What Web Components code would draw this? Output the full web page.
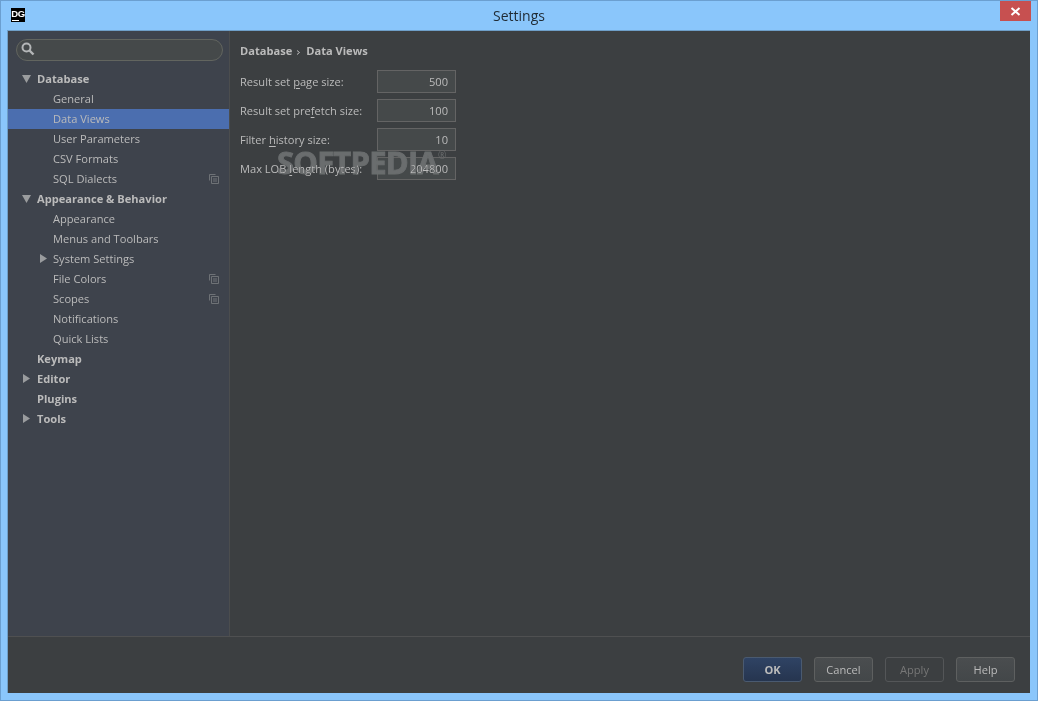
<!DOCTYPE html>
<html>
<head>
<meta charset="utf-8">
<title>Settings</title>
<style>
    html, body {
        margin: 0;
        padding: 0;
        height: 100%;
        background: #8ac6fb;
    }
</style>
</head>
<body>

<settings-window>
    <settings-tree slot="side">
        <tree-item level="0" arrow="down" bold>Database</tree-item>
        <tree-item level="1">General</tree-item>
        <tree-item level="1" selected>Data Views</tree-item>
        <tree-item level="1">User Parameters</tree-item>
        <tree-item level="1">CSV Formats</tree-item>
        <tree-item level="1" copy>SQL Dialects</tree-item>
        <tree-item level="0" arrow="down" bold>Appearance &amp; Behavior</tree-item>
        <tree-item level="1">Appearance</tree-item>
        <tree-item level="1">Menus and Toolbars</tree-item>
        <tree-item level="1" arrow="right">System Settings</tree-item>
        <tree-item level="1" copy>File Colors</tree-item>
        <tree-item level="1" copy>Scopes</tree-item>
        <tree-item level="1">Notifications</tree-item>
        <tree-item level="1">Quick Lists</tree-item>
        <tree-item level="0" bold>Keymap</tree-item>
        <tree-item level="0" arrow="right" bold>Editor</tree-item>
        <tree-item level="0" bold>Plugins</tree-item>
        <tree-item level="0" arrow="right" bold>Tools</tree-item>
    </settings-tree>

    <data-views slot="main"></data-views>

    <dialog-button slot="buttons" kind="default">OK</dialog-button>
    <dialog-button slot="buttons">Cancel</dialog-button>
    <dialog-button slot="buttons" kind="disabled">Apply</dialog-button>
    <dialog-button slot="buttons">Help</dialog-button>
</settings-window>

<script type="text/javascript">
    'use strict'

    class SettingsWindow extends HTMLElement {
        constructor () {
            super();
            let root = this.attachShadow({mode: 'open'});
            root.innerHTML = `
                <style>
                    :host {
                        display: flex;
                        flex-direction: column;
                        position: relative;
                        box-sizing: border-box;
                        width: 1038px;
                        height: 701px;
                        background: #8ac6fb;
                        border: 1px solid #6b9fd0;
                        font: 11.1px "Open Sans", "Noto Sans", sans-serif;
                        color: #bbbbbb;
                    }
                    .title {
                        flex: none;
                        height: 29px;
                        display: flex;
                        align-items: center;
                        justify-content: center;
                        position: relative;
                        font: 14px "Open Sans", "Noto Sans", sans-serif;
                        color: #1f2a33;
                    }
                    .logo {
                        position: absolute;
                        left: 10px;
                        top: 7px;
                        width: 14px;
                        height: 14px;
                        background: #000;
                        color: #fff;
                        font: bold 9.5px/11px "Liberation Sans", sans-serif;
                        letter-spacing: -0.4px;
                        text-align: center;
                    }
                    .logo::after {
                        content: '';
                        position: absolute;
                        left: 1px;
                        bottom: 1px;
                        width: 7px;
                        height: 1px;
                        background: #fff;
                    }
                    .close {
                        position: absolute;
                        right: 6px;
                        top: 0;
                        width: 31px;
                        height: 20px;
                        background: #c75050;
                        display: flex;
                        align-items: center;
                        justify-content: center;
                    }
                    .client {
                        flex: none;
                        margin: 0 7px 0 6px;
                        height: 663px;
                        box-sizing: border-box;
                        border-top: 1px solid #6f9fc8;
                        border-left: 1px solid #6f9fc8;
                        background: #3c3f41;
                        display: flex;
                        flex-direction: column;
                    }
                    .panes {
                        flex: 1;
                        display: flex;
                        min-height: 0;
                    }
                    .side {
                        flex: none;
                        width: 221px;
                        background: #3e434c;
                        border-right: 1px solid #4b4d4e;
                    }
                    .main {
                        flex: 1;
                    }
                    .foot {
                        flex: none;
                        box-sizing: border-box;
                        height: 57px;
                        border-top: 1px solid #4f5051;
                        display: flex;
                        justify-content: flex-end;
                        align-items: flex-start;
                        gap: 12px;
                        padding: 20px 15px 0 0;
                    }
                </style>
                <div class="title">
                    <span class="logo">DG</span>
                    <span>Settings</span>
                    <span class="close">
                        <svg width="11" height="9" viewBox="0 0 11 9"><path d="M1.5 1 L9.5 8 M9.5 1 L1.5 8" stroke="#fff" stroke-width="2" fill="none"/></svg>
                    </span>
                </div>
                <div class="client">
                    <div class="panes">
                        <div class="side"><slot name="side"></slot></div>
                        <div class="main"><slot name="main"></slot></div>
                    </div>
                    <div class="foot"><slot name="buttons"></slot></div>
                </div>
            `;
        }
    }
    customElements.define('settings-window', SettingsWindow);

    class SettingsTree extends HTMLElement {
        constructor () {
            super();
            let root = this.attachShadow({mode: 'open'});
            root.innerHTML = `
                <style>
                    :host {
                        display: block;
                        padding-top: 8px;
                    }
                    .search {
                        box-sizing: border-box;
                        height: 22px;
                        margin: 0 6px 8px 8px;
                        border: 1px solid #62655f;
                        border-radius: 11px;
                        background: #45494a;
                        display: flex;
                        align-items: center;
                        padding-left: 4px;
                    }
                </style>
                <div class="search">
                    <svg width="16" height="16" viewBox="0 0 16 16"><circle cx="5.5" cy="5.5" r="4" fill="none" stroke="#b4b6b7" stroke-width="2"/><path d="M8.5 8.5 L12.5 12.5" stroke="#b4b6b7" stroke-width="2.4"/></svg>
                </div>
                <slot></slot>
            `;
        }
    }
    customElements.define('settings-tree', SettingsTree);

    class TreeItem extends HTMLElement {
        constructor () {
            super();
            let root = this.attachShadow({mode: 'open'});
            let level = this.getAttribute('level') === '1' ? 1 : 0;
            let arrow = this.getAttribute('arrow');
            let marker = '';
            if (arrow === 'down') {
                marker = '<svg class="arrow down" width="9" height="8" viewBox="0 0 9 8"><path d="M0 0 H9 L4.5 8 Z" fill="#9a9c9e"/></svg>';
            } else if (arrow === 'right') {
                marker = '<svg class="arrow right" width="7" height="9" viewBox="0 0 7 9"><path d="M0 0 L7 4.5 L0 9 Z" fill="#9a9c9e"/></svg>';
            }
            let copy = this.hasAttribute('copy')
                ? '<svg class="copy" width="10" height="10" viewBox="0 0 10 10"><path d="M0.5 6.5 V0.5 H6.5 M2.5 2.5 H9.5 V9.5 H2.5 Z M4 5 H8 M4 7 H8" fill="none" stroke="#6e7276"/></svg>'
                : '';
            root.innerHTML = `
                <style>
                    :host {
                        display: flex;
                        align-items: center;
                        position: relative;
                        box-sizing: border-box;
                        height: 20px;
                        padding-left: ${level ? 45 : 29}px;
                        padding-bottom: 2px;
                        color: #bbbbbb;
                        font-weight: ${this.hasAttribute('bold') ? 700 : 400};
                        white-space: nowrap;
                    }
                    :host([selected]) {
                        background: #4b6eaf;
                    }
                    .arrow {
                        position: absolute;
                    }
                    .down {
                        left: 14px;
                        top: 6px;
                    }
                    .right {
                        left: ${level ? 32 : 15}px;
                        top: 5px;
                    }
                    .copy {
                        position: absolute;
                        right: 10px;
                        top: 5px;
                    }
                </style>
                ${marker}<slot></slot>${copy}
            `;
        }
    }
    customElements.define('tree-item', TreeItem);

    class DataViews extends HTMLElement {
        constructor () {
            super();
            let root = this.attachShadow({mode: 'open'});
            root.innerHTML = `
                <style>
                    :host {
                        display: block;
                        position: relative;
                        height: 100%;
                        padding: 11px 0 0 10px;
                        box-sizing: border-box;
                        color: #bbbbbb;
                    }
                    .crumbs {
                        font-weight: 700;
                        height: 18px;
                        line-height: 18px;
                        margin-bottom: 10px;
                        white-space: nowrap;
                    }
                    .crumbs svg {
                        margin: 0 5px 0 4px;
                    }
                    .fields {
                        display: grid;
                        grid-template-columns: 137px 79px;
                        grid-auto-rows: 23px;
                        row-gap: 6px;
                        align-items: center;
                        width: max-content;
                    }
                    .value {
                        box-sizing: border-box;
                        height: 23px;
                        border: 1px solid #646464;
                        background: #45494a;
                        text-align: right;
                        padding-right: 7px;
                        line-height: 21px;
                    }
                    u {
                        text-underline-offset: 2px;
                    }
                    /* lighten keeps the brighter labels readable through the watermark */
                    .mark {
                        position: absolute;
                        left: 47px;
                        top: 112px;
                        font: 700 31px/38px "Open Sans", sans-serif;
                        letter-spacing: -0.8px;
                        -webkit-text-stroke: 0.9px #6a6d6e;
                        color: #6a6d6e;
                        mix-blend-mode: lighten;
                        white-space: nowrap;
                    }
                    .mark sup {
                        font-size: 10px;
                        font-weight: 400;
                        letter-spacing: 0;
                        -webkit-text-stroke: 0;
                        vertical-align: 15px;
                        line-height: 0;
                    }
                </style>
                <div class="crumbs">Database<svg width="5" height="5" viewBox="0 0 5 5"><path d="M1 0.5 L3.5 2.5 L1 4.5" fill="none" stroke="#bbbbbb"/></svg>Data Views</div>
                <div class="fields">
                    <span>Result set <u>p</u>age size:</span><span class="value">500</span>
                    <span>Result set pre<u>f</u>etch size:</span><span class="value">100</span>
                    <span>Filter <u>h</u>istory size:</span><span class="value">10</span>
                    <span>Max LOB <u>l</u>ength (bytes):</span><span class="value">204800</span>
                </div>
                <div class="mark">SOFTPEDIA<sup>®</sup></div>
            `;
        }
    }
    customElements.define('data-views', DataViews);

    class DialogButton extends HTMLElement {
        constructor () {
            super();
            let root = this.attachShadow({mode: 'open'});
            root.innerHTML = `
                <style>
                    :host {
                        display: flex;
                        align-items: center;
                        justify-content: center;
                        box-sizing: border-box;
                        width: 59px;
                        height: 25px;
                        border: 1px solid #5e6060;
                        border-radius: 3px;
                        background: linear-gradient(#4a4d4f, #434749);
                        color: #bbbbbb;
                    }
                    :host([kind="default"]) {
                        background: linear-gradient(#2f4364, #26354f);
                        border-color: #4a5a70;
                        font-weight: 700;
                    }
                    :host([kind="disabled"]) {
                        background: #3c3f41;
                        border-color: #545658;
                        color: #777777;
                    }
                </style>
                <slot></slot>
            `;
        }
    }
    customElements.define('dialog-button', DialogButton);
</script>
</body>
</html>
